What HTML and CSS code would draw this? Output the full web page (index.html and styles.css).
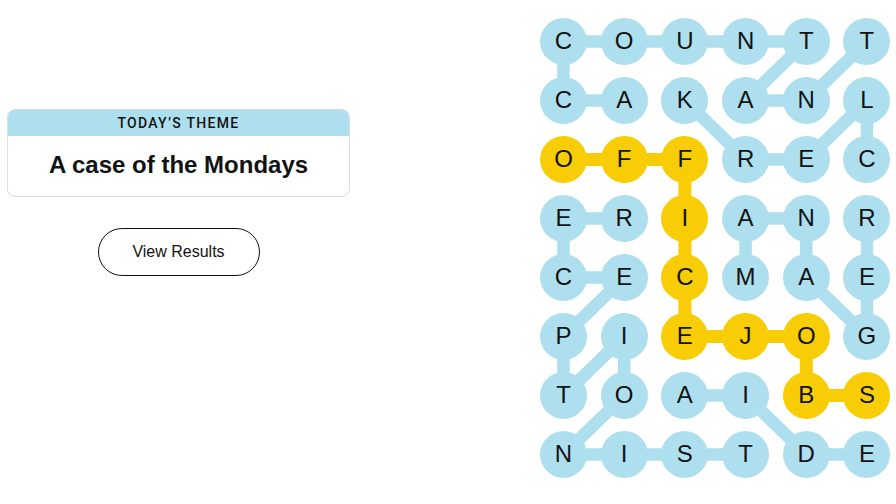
FILE: index.html
```html
<!DOCTYPE html>
<html lang="en">
<head>
<meta charset="utf-8">
<title>Strands</title>
<link rel="stylesheet" href="styles.css">
</head>
<body>
<div class="page">
  <section class="side">
    <div class="theme-card">
      <div class="theme-head">Today’s Theme</div>
      <div class="theme-body">A case of the Mondays</div>
    </div>
    <button class="results-btn" type="button">View Results</button>
  </section>

  <section class="board">
    <svg class="links" viewBox="0 0 350.5 460" width="350.5" height="460" aria-hidden="true">
      <g fill="none" stroke-linejoin="round" stroke-linecap="round">
        <g class="link-blue">
          <polyline points="84.2,82.5 23.5,82.5 23.5,23.5 84.2,23.5 144.9,23.5 205.6,23.5 266.3,23.5 205.6,82.5 266.3,82.5 327,23.5"/>
          <polyline points="327,141.5 327,82.5 266.3,141.5 205.6,141.5 144.9,82.5"/>
          <polyline points="84.2,200.5 23.5,200.5 23.5,259.5 84.2,259.5 23.5,318.5 23.5,377.5 84.2,318.5 84.2,377.5 23.5,436.5 84.2,436.5 144.9,436.5 205.6,436.5"/>
          <polyline points="205.6,259.5 205.6,200.5 266.3,200.5 266.3,259.5 327,318.5 327,259.5 327,200.5"/>
          <polyline points="144.9,377.5 205.6,377.5 266.3,436.5 327,436.5"/>
        </g>
        <g class="link-gold">
          <polyline points="23.5,141.5 84.2,141.5 144.9,141.5 144.9,200.5 144.9,259.5 144.9,318.5 205.6,318.5 266.3,318.5 266.3,377.5 327,377.5"/>
        </g>
      </g>
    </svg>
    <div class="grid">
      <span class="cell">C</span><span class="cell">O</span><span class="cell">U</span><span class="cell">N</span><span class="cell">T</span><span class="cell">T</span>
      <span class="cell">C</span><span class="cell">A</span><span class="cell">K</span><span class="cell">A</span><span class="cell">N</span><span class="cell">L</span>
      <span class="cell gold">O</span><span class="cell gold">F</span><span class="cell gold">F</span><span class="cell">R</span><span class="cell">E</span><span class="cell">C</span>
      <span class="cell">E</span><span class="cell">R</span><span class="cell gold">I</span><span class="cell">A</span><span class="cell">N</span><span class="cell">R</span>
      <span class="cell">C</span><span class="cell">E</span><span class="cell gold">C</span><span class="cell">M</span><span class="cell">A</span><span class="cell">E</span>
      <span class="cell">P</span><span class="cell">I</span><span class="cell gold">E</span><span class="cell gold">J</span><span class="cell gold">O</span><span class="cell">G</span>
      <span class="cell">T</span><span class="cell">O</span><span class="cell">A</span><span class="cell">I</span><span class="cell gold">B</span><span class="cell gold">S</span>
      <span class="cell">N</span><span class="cell">I</span><span class="cell">S</span><span class="cell">T</span><span class="cell">D</span><span class="cell">E</span>
    </div>
  </section>
</div>
</body>
</html>
```

FILE: styles.css
```css
* { box-sizing: border-box; }

html, body {
  margin: 0;
  padding: 0;
  background: #ffffff;
  width: 896px;
  height: 504px;
  overflow: hidden;
}

body {
  font-family: "Liberation Sans", Arial, sans-serif;
  color: #121212;
}

.page {
  display: flex;
  align-items: flex-start;
  padding: 17.5px 0 0 7px;
  gap: 190px;
}

.side {
  width: 343px;
  margin-top: 91.5px;
  display: flex;
  flex-direction: column;
  align-items: center;
}

.theme-card {
  width: 343px;
  border: 1px solid #dcdcdc;
  border-radius: 8px;
  overflow: hidden;
}

.theme-head {
  background: #aedfee;
  height: 26px;
  display: flex;
  align-items: center;
  justify-content: center;
  text-transform: uppercase;
  font-family: Roboto, "Liberation Sans", Arial, sans-serif;
  font-size: 14px;
  font-weight: 500;
  letter-spacing: 1.3px;
  color: #121212;
}

.theme-body {
  height: 60px;
  display: flex;
  align-items: center;
  justify-content: center;
  font-size: 24px;
  font-weight: 700;
  padding-bottom: 2px;
}

.results-btn {
  margin-top: 31px;
  width: 162px;
  height: 48px;
  border: 1px solid #121212;
  border-radius: 24px;
  background: #ffffff;
  font-family: "Liberation Sans", Arial, sans-serif;
  font-size: 16px;
  color: #121212;
  padding: 0;
}

.board {
  position: relative;
  width: 350.5px;
  height: 460px;
}

.links {
  position: absolute;
  left: 0;
  top: 0;
}

.link-blue { stroke: #aedfee; stroke-width: 12.5; }
.link-gold { stroke: #f8cd05; stroke-width: 13; }

.grid {
  position: relative;
  display: grid;
  grid-template-columns: repeat(6, 47px);
  grid-auto-rows: 47px;
  column-gap: 13.7px;
  row-gap: 12px;
}

.cell {
  width: 47px;
  height: 47px;
  border-radius: 50%;
  background: #aedfee;
  display: flex;
  align-items: center;
  justify-content: center;
  font-size: 24px;
  color: #121212;
  text-transform: uppercase;
}

.cell.gold { background: #f8cd05; }
```
